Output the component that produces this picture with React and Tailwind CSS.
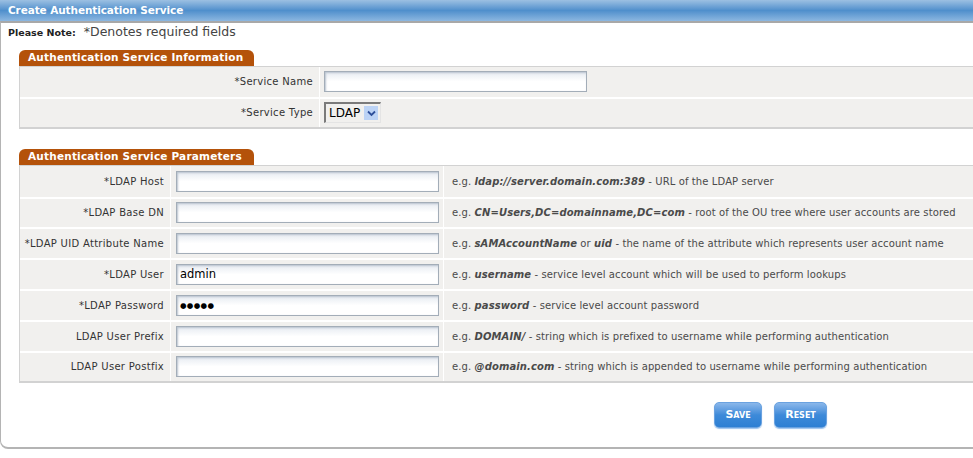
const serviceRows = [
  { label: "*Service Name", kind: "text" },
  { label: "*Service Type", kind: "select" },
];

const paramRows = [
  {
    label: "*LDAP Host",
    value: "",
    hint: (
      <>
        e.g. <b className="italic">ldap://server.domain.com:389</b> - URL of the LDAP server
      </>
    ),
  },
  {
    label: "*LDAP Base DN",
    value: "",
    hint: (
      <>
        e.g. <b className="italic">CN=Users,DC=domainname,DC=com</b> - root of the OU tree where user accounts are stored
      </>
    ),
  },
  {
    label: "*LDAP UID Attribute Name",
    value: "",
    hint: (
      <>
        e.g. <b className="italic">sAMAccountName</b> or <b className="italic">uid</b> - the name of the attribute which represents user account name
      </>
    ),
  },
  {
    label: "*LDAP User",
    value: "admin",
    hint: (
      <>
        e.g. <b className="italic">username</b> - service level account which will be used to perform lookups
      </>
    ),
  },
  {
    label: "*LDAP Password",
    value: "●●●●●",
    hint: (
      <>
        e.g. <b className="italic">password</b> - service level account password
      </>
    ),
  },
  {
    label: "LDAP User Prefix",
    value: "",
    hint: (
      <>
        e.g. <b className="italic">DOMAIN/</b> - string which is prefixed to username while performing authentication
      </>
    ),
  },
  {
    label: "LDAP User Postfix",
    value: "",
    hint: (
      <>
        e.g. <b className="italic">@domain.com</b> - string which is appended to username while performing authentication
      </>
    ),
  },
];

function TextBox({ width, value }) {
  return (
    <div
      className={`flex h-[21px] items-center border border-[#a3adb8] bg-gradient-to-b from-[#e6ebf1] via-white to-white pl-[3px] text-[11.5px] text-black shadow-[inset_1px_1px_2px_#b9c3cf] ${width}`}
    >
      {value === "●●●●●" ? <span className="text-[7.5px] tracking-[0.3px]">{value}</span> : value}
    </div>
  );
}

function SelectBox() {
  return (
    <div className="flex h-[21px] w-[57px] items-center border-l-2 border-t-2 border-[#7a7a7a] border-b border-r border-b-[#e4e4e4] border-r-[#e4e4e4] bg-[#f1f0ee] pl-[3px] text-[12px] text-black">
      <span className="flex-1">LDAP</span>
      <span className="mr-[2px] flex h-[14px] w-[14px] items-center justify-center bg-[#bcd3f5]">
        <svg width="9" height="7" viewBox="0 0 9 7">
          <path d="M1 1.5 L4.5 5 L8 1.5" fill="none" stroke="#2d4f9a" strokeWidth="1.8" />
        </svg>
      </span>
    </div>
  );
}

function SectionTab({ children }) {
  return (
    <div className="flex h-[16px] w-[235px] items-center whitespace-nowrap rounded-t-[6px] bg-[#b4520a] pl-[9px] text-[10.5px] font-bold tracking-[0.2px] text-white">
      {children}
    </div>
  );
}

function BlueButton({ children, width }) {
  return (
    <button
      type="button"
      className={`flex h-[26px] items-center justify-center rounded-[5px] border border-[#6aa2e0] bg-gradient-to-b from-[#8ab7ea] via-[#3d8ad9] to-[#2d7fd3] text-[11px] font-bold text-white [font-variant:small-caps] shadow-[0_1px_1px_#9cc3ee] ${width}`}
    >
      {children}
    </button>
  );
}

export default function App() {
  return (
    <div className="h-[458px] w-[973px] overflow-hidden bg-white font-['DejaVu_Sans',Verdana,sans-serif] text-[#333]">
      <div className="flex h-[21px] items-center bg-gradient-to-b from-[#9cc0e2] via-[#4f8fcc] to-[#8cb7e0] pl-[8px] text-[10.5px] font-bold tracking-[-0.1px] text-white">
        Create Authentication Service
      </div>

      <div className="h-[428px] w-[1000px] rounded-bl-[8px] border-b-2 border-l border-t-2 border-[#b4b4b4] border-t-[#a8a8a8]">
        <div className="flex items-baseline gap-[8px] pl-[7px]">
          <span className="text-[9.5px] font-bold text-[#222]">Please Note:</span>
          <span className="text-[12.5px] text-[#444]">*Denotes required fields</span>
        </div>

        <div className="ml-[18px] mt-[8px]">
          <SectionTab>Authentication Service Information</SectionTab>
          <div className="border-b-2 border-l border-t border-[#d2d2d2] bg-[#f1f0ee]">
            {serviceRows.map((row, i) => (
              <div
                key={row.label}
                className={`flex h-[30px] items-center ${i > 0 ? "border-t-2 border-white" : ""}`}
              >
                <div className="flex h-full w-[300px] items-center justify-end border-r border-white pr-[6px] text-[10px] tracking-[0.3px]">
                  {row.label}
                </div>
                <div className="pl-[4px]">
                  {row.kind === "text" ? <TextBox width="w-[263px]" value="" /> : <SelectBox />}
                </div>
              </div>
            ))}
          </div>
        </div>

        <div className="ml-[18px] mt-[20px]">
          <SectionTab>Authentication Service Parameters</SectionTab>
          <div className="border-b-2 border-l border-t border-[#d2d2d2] bg-[#f1f0ee]">
            {paramRows.map((row, i) => (
              <div
                key={row.label}
                className={`flex h-[30.8px] items-center ${i > 0 ? "border-t-2 border-white" : ""}`}
              >
                <div className="flex h-full w-[151px] items-center justify-end border-r border-white pr-[6px] text-[10px] tracking-[0.3px]">
                  {row.label}
                </div>
                <div className="flex h-full w-[273px] items-center border-r border-white pl-[5px]">
                  <TextBox width="w-[263px]" value={row.value} />
                </div>
                <div className="whitespace-nowrap pl-[8px] text-[10px] tracking-[0.1px] text-[#4a4a4a]">{row.hint}</div>
              </div>
            ))}
          </div>
        </div>

        <div className="mt-[19px] flex gap-[12px] pl-[713px]">
          <BlueButton width="w-[48px]">Save</BlueButton>
          <BlueButton width="w-[53px]">Reset</BlueButton>
        </div>
      </div>
    </div>
  );
}
